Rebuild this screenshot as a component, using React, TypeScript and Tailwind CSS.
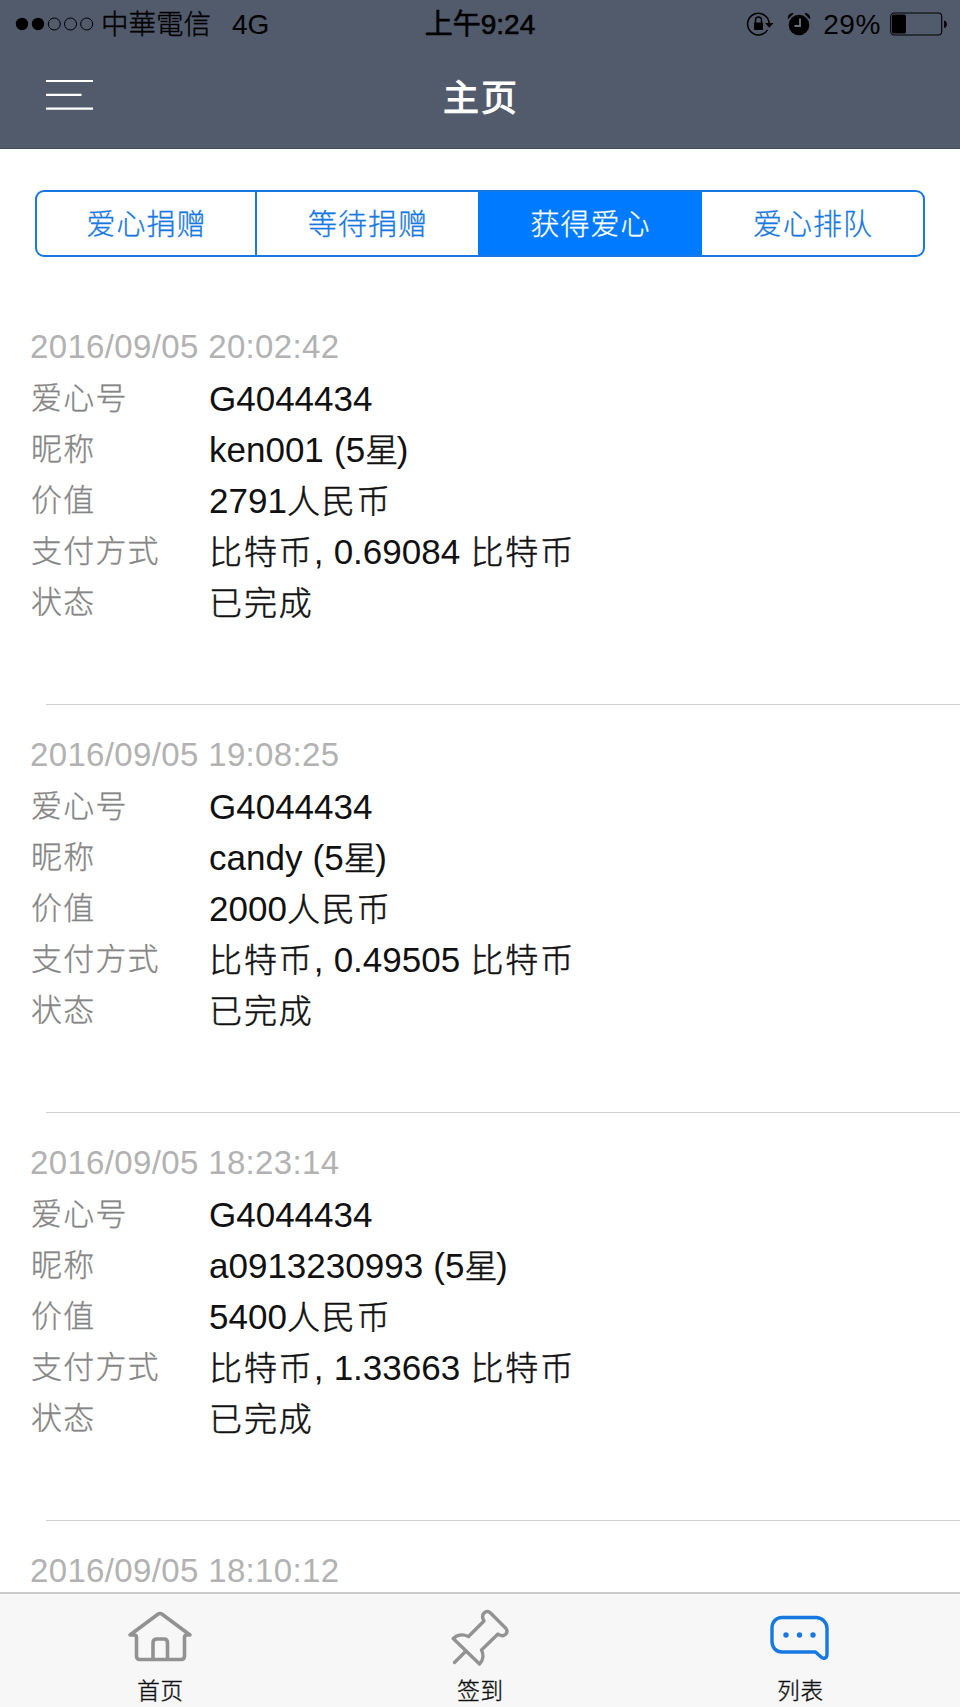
import type { ReactNode } from 'react';
import clsx from 'clsx';

type Donation = {
  date: string;
  details?: {
    code: string;
    name: string;
    value: string;
    payment: string;
    status: string;
  };
};

const segments = ['爱心捐赠', '等待捐赠', '获得爱心', '爱心排队'];
const segmentWidths = ['w-[220px]', 'w-[221px]', 'w-[224px]', 'w-[221px]'];
const activeSegment = 2;

const donations: Donation[] = [
  {
    date: '2016/09/05 20:02:42',
    details: { code: 'G4044434', name: 'ken001 (5星)', value: '2791人民币', payment: '比特币, 0.69084 比特币', status: '已完成' },
  },
  {
    date: '2016/09/05 19:08:25',
    details: { code: 'G4044434', name: 'candy (5星)', value: '2000人民币', payment: '比特币, 0.49505 比特币', status: '已完成' },
  },
  {
    date: '2016/09/05 18:23:14',
    details: { code: 'G4044434', name: 'a0913230993 (5星)', value: '5400人民币', payment: '比特币, 1.33663 比特币', status: '已完成' },
  },
  { date: '2016/09/05 18:10:12' },
];

// Chinese runs are set a little smaller, lighter and looser than the latin ones
function MixedText({ text }: { text: string }) {
  return (
    <>
      {text.split(/([\u4e00-\u9fff]+)/).map((part, i) =>
        i % 2 === 1 ? (
          <span
            key={i}
            className={clsx(
              'text-[33px] font-light [-webkit-text-stroke:0.5px_#111]',
              part.length > 1 ? 'tracking-[1.9px]' : 'tracking-[-1.5px]'
            )}
          >
            {part}
          </span>
        ) : (
          <span key={i}>{part}</span>
        )
      )}
    </>
  );
}

function StatusBar() {
  return (
    <div className="grid h-[46px] grid-cols-3 text-[28px] leading-[46px] text-black">
      <div className="flex items-center pl-[15px]">
        <svg width="80" height="14" viewBox="0 0 80 14" fill="none" stroke="#000">
          <circle cx="7" cy="7" r="6.2" fill="#000" stroke="none" />
          <circle cx="23" cy="7" r="6.2" fill="#000" stroke="none" />
          <circle cx="39.3" cy="7" r="6" />
          <circle cx="55.5" cy="7" r="6" />
          <circle cx="71.7" cy="7" r="6" />
        </svg>
        <span className="ml-[6px] mt-[2px] text-[27.5px] font-light [-webkit-text-stroke:0.4px_#000]">中華電信</span>
        <span className="ml-[21px] mt-[2px]">4G</span>
      </div>
      <div className="mt-[2px] text-center [-webkit-text-stroke:0.6px_#000]">上午9:24</div>
      <div className="flex items-center justify-end pr-[12px]">
        <svg width="28" height="26" viewBox="0 0 28 26" fill="none" stroke="#000" strokeWidth="1.5">
          <path d="M21.6 18.8A10.8 10.8 0 1 1 23.2 12.5" />
          <path d="M19 12h8.5l-4.2 4.8z" fill="#000" stroke="none" />
          <rect x="8" y="11.5" width="9" height="7.5" rx="0.8" fill="#000" stroke="none" />
          <path d="M9.5 12.5V9a3 3 0 0 1 6 0v3.5" />
        </svg>
        <svg width="24" height="24" viewBox="0 0 24 24" className="ml-[13px]">
          <circle cx="12" cy="13" r="10.3" fill="#000" />
          <path d="M1.3 6.5C1 3.5 3 1.5 6 1.6Z M22.7 6.5C23 3.5 21 1.5 18 1.6Z" fill="#000" stroke="#000" strokeLinejoin="round" />
          <path d="M13 6.5V14H7.5" fill="none" stroke="#6b7382" strokeWidth="1.8" />
        </svg>
        <span className="ml-[12px] mt-[2px] tracking-[0.6px]">29%</span>
        <svg width="58" height="24" viewBox="0 0 58 24" className="ml-[9px]">
          <rect x="0.7" y="1" width="51" height="22" rx="3.5" fill="none" stroke="#000" strokeWidth="1.1" />
          <rect x="2" y="2.5" width="14" height="19" rx="1.5" fill="#000" />
          <path d="M54 8.5c4 1 4 6.5 0 7.5z" fill="#000" />
        </svg>
      </div>
    </div>
  );
}

function Header() {
  return (
    <header className="h-[149px] shrink-0 border-b border-[#474f5e] bg-[#525b6b]">
      <StatusBar />
      <div className="grid grid-cols-3 items-start">
        <svg width="47" height="32" viewBox="0 0 47 32" className="ml-[46px] mt-[33px]" fill="none" stroke="#fff" strokeWidth="2.2">
          <path d="M0 2H47M0 15.8H35.5M0 29.7H47" />
        </svg>
        <h1 className="pt-[26px] pl-[2px] text-center text-[36px] leading-[54px] tracking-[2px] text-white [-webkit-text-stroke:1px_#fff]">主页</h1>
      </div>
    </header>
  );
}

function SegmentedControl() {
  return (
    <div className="ml-[35px] flex h-[67px] w-[890px] overflow-hidden rounded-[9px] border-2 border-[#1678e0]">
      {segments.map((label, i) => (
        <div
          key={label}
          className={clsx(
            'flex shrink-0 items-center justify-center pt-[5px] pl-[1px] text-[29px] font-light tracking-[1px]',
            segmentWidths[i],
            i === 0 && 'border-r-2 border-[#1678e0]',
            i === activeSegment
              ? 'bg-[#007aff] text-white [-webkit-text-stroke:0.3px_#fff]'
              : 'text-[#1678e0] [-webkit-text-stroke:0.3px_#1678e0]'
          )}
        >
          {label}
        </div>
      ))}
    </div>
  );
}

function Row({ label, children }: { label: string; children: ReactNode }) {
  return (
    <div className="flex h-[51px] items-center">
      <dt className="w-[178px] pt-[2px] text-[31px] font-light tracking-[1.2px] text-[#858585] [-webkit-text-stroke:0.3px_#858585]">{label}</dt>
      <dd className="whitespace-pre pt-[2px] text-[35px] text-[#111] [word-spacing:0.5px]">{children}</dd>
    </div>
  );
}

function DonationItem({ item }: { item: Donation }) {
  const { date, details } = item;
  return (
    <li className={details && 'h-[408px]'}>
      <div className="pl-[30px] pt-[17px]">
        <div className="flex h-[51px] items-center text-[33px] tracking-[0.35px] text-[#b2b2b2]">{date}</div>
        {details && (
          <dl className="pt-px pl-px">
            <Row label="爱心号">{details.code}</Row>
            <Row label="昵称"><MixedText text={details.name} /></Row>
            <Row label="价值"><MixedText text={details.value} /></Row>
            <Row label="支付方式"><MixedText text={details.payment} /></Row>
            <Row label="状态"><MixedText text={details.status} /></Row>
          </dl>
        )}
      </div>
      {details && <div className="ml-[46px] mt-[76px] h-px bg-[#cfcfcf]" />}
    </li>
  );
}

function HomeIcon() {
  return (
    <svg width="68" height="60" viewBox="0 0 68 60" fill="none" stroke="#929292" strokeWidth="3.6" strokeLinejoin="round" strokeLinecap="round">
      <path d="M10.5 29.5Q10.5 27 8 27H4L31.5 6.5Q34 4.5 36.5 6.5L64 27H61Q58.5 27 58.5 29.5V48Q58.5 51.5 55 51.5H13.5Q10.5 51.5 10.5 48Z" />
      <path d="M27 51V35Q27 31 31 31H38Q41.5 31 41.5 35V51" />
    </svg>
  );
}

function PinIcon() {
  return (
    <svg width="68" height="60" viewBox="0 0 68 60" fill="none" stroke="#929292" strokeWidth="3.4" strokeLinejoin="round" strokeLinecap="round">
      <path d="M37.5 12C34.5 6 40 1.5 44 4.500L60 20.5C63 25.5 57.5 30 52 26L35.5 42C38 47 37 52.500 33.5 56L7.2 30.5C11.5 26.5 17 26 22.5 28.5L38 13Z" />
      <path d="M20 43L8.5 54.500" />
    </svg>
  );
}

function ChatIcon() {
  return (
    <svg width="68" height="60" viewBox="0 0 68 60" fill="none" stroke="#1678e0" strokeWidth="3.4" strokeLinejoin="round" strokeLinecap="round">
      <path d="M16 9.500H50C56 9.500 61 14.500 61 20.500V46C61 50.500 57.5 51.500 54.5 48.500L49.5 44H16C10 44 6 39.500 6 33.500V20C6 14 10 9.500 16 9.500Z" />
      <g fill="#1678e0" stroke="none">
        <circle cx="20" cy="27" r="2.7" />
        <circle cx="33.5" cy="27" r="2.7" />
        <circle cx="47" cy="27" r="2.7" />
      </g>
    </svg>
  );
}

function Tab({ label, icon }: { label: string; icon: ReactNode }) {
  return (
    <div className="flex flex-col items-center pt-[14px]">
      {icon}
      <span className="mt-[9px] pl-px text-[22.5px] font-light leading-[30px] tracking-[0.8px] text-[#111] [-webkit-text-stroke:0.4px_#111]">{label}</span>
    </div>
  );
}

function TabBar() {
  return (
    <nav className="grid h-[115px] shrink-0 grid-cols-3 border-t-2 border-[#cbcbcb] bg-[#f7f7f7]">
      <Tab label="首页" icon={<HomeIcon />} />
      <Tab label="签到" icon={<PinIcon />} />
      <Tab label="列表" icon={<ChatIcon />} />
    </nav>
  );
}

export default function App() {
  return (
    <div className="flex h-[1707px] w-[960px] flex-col overflow-hidden bg-white font-['Liberation_Sans','Noto_Sans_CJK_SC',sans-serif]">
      <Header />
      <main className="min-h-0 flex-1 overflow-hidden pt-[41px]">
        <SegmentedControl />
        <ul className="mt-[47px]">
          {donations.map((item) => (
            <DonationItem key={item.date} item={item} />
          ))}
        </ul>
      </main>
      <TabBar />
    </div>
  );
}
